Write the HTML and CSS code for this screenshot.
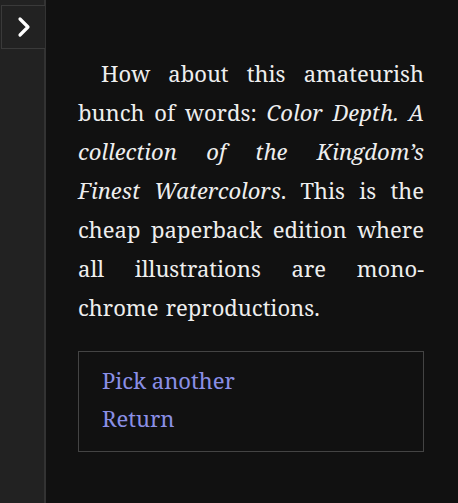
FILE: index.html
```html
<!DOCTYPE html>
<html lang="en">
<head>
  <meta charset="UTF-8" />
  <title>Color Depth</title>
  <link rel="stylesheet" href="styles.css">
</head>
<body>
  <div class="layout">
    <!-- боковая панель -->
    <aside class="sidebar">
      <button class="toggle" type="button" aria-label="Open menu">
        <svg width="14" height="22" viewBox="0 0 14 22">
          <path d="M3 3 L11 11 L3 19" fill="none" stroke="#fff" stroke-width="3.2" stroke-linecap="round" stroke-linejoin="round"/>
        </svg>
      </button>
    </aside>

    <main class="story">
      <p class="passage">
        How about this amateurish bunch of words: <em>Color Depth. A collection of the Kingdom’s Finest Watercolors</em>. This is the cheap paperback edition where all illustrations are mono&shy;chrome reproductions.
      </p>

      <ul class="choices">
        <li><a href="#">Pick another</a></li>
        <li><a href="#">Return</a></li>
      </ul>
    </main>
  </div>
</body>
</html>
```

FILE: styles.css
```css
/* --- сброс --- */
* {
  margin: 0;
  padding: 0;
  box-sizing: border-box;
}
html, body {
  height: 100%;
}
body {
  background: #111;
  color: #eee;
  font-family: 'Noto Serif', 'DejaVu Serif', serif;
}

.layout {
  display: flex;
  min-height: 100%;
}

/* --- боковая панель --- */
.sidebar {
  width: 46px;
  flex-shrink: 0;
  background: #222;
  border-right: 2px solid #333;
  padding-top: 5px;
}
.toggle {
  display: flex;
  align-items: center;
  justify-content: center;
  width: 44px;
  height: 44px;
  margin-left: 1px;
  background: #222;
  border: 1px solid #3a3a3a;
  border-right: none;
  cursor: pointer;
}

/* --- текст --- */
.story {
  flex: 1;
  padding: 54px 34px 0 32px;
}
.passage {
  font-size: 22px;
  line-height: 39px;
  word-spacing: 1.5px;
  text-align: justify;
  text-indent: 23px;
  hyphens: manual;
}

/* --- выбор --- */
.choices {
  list-style: none;
  margin-top: 24px;
  border: 1px solid #444;
  padding: 9px 23px 14px;
  font-size: 22px;
  line-height: 38px;
}
.choices a {
  color: #8a8fe6;
  text-decoration: none;
}
.choices a:hover {
  text-decoration: underline;
}
```
